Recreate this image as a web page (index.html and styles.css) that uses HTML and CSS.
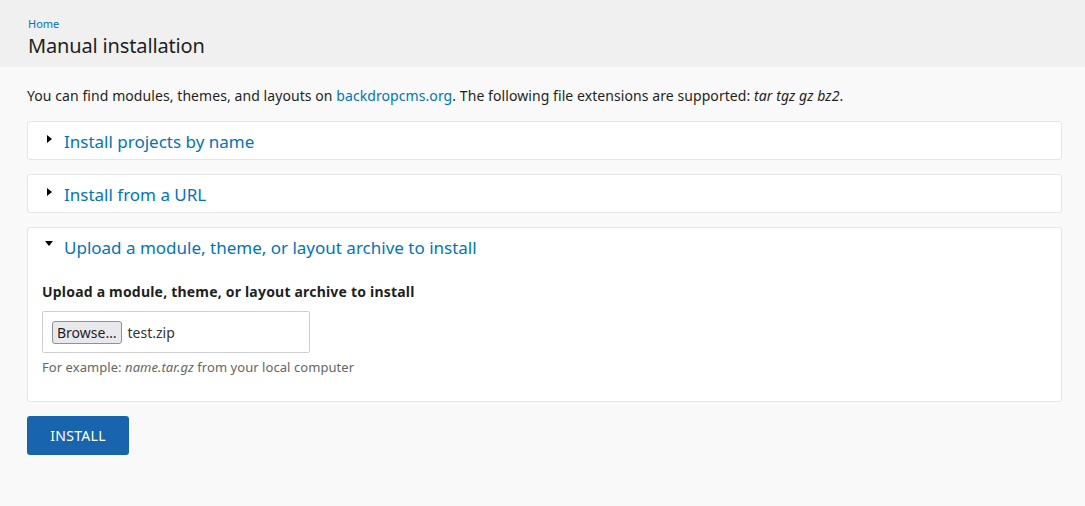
FILE: index.html
```html
<!DOCTYPE html>
<html>
<head>
<meta charset="utf-8">
<link rel="stylesheet" href="styles.css">
</head>
<body>
<header class="page-header">
  <nav class="breadcrumb"><a href="#">Home</a></nav>
  <h1 class="page-title">Manual installation</h1>
</header>
<main class="content">
  <p class="intro">You can find modules, themes, and layouts on <a href="#">backdropcms.org</a>. The following file extensions are supported: <em>tar tgz gz bz2</em>.</p>
  <section class="fieldset collapsed">
    <div class="legend"><span class="tri tri-right"></span><span class="legend-text">Install projects by name</span></div>
  </section>
  <section class="fieldset collapsed">
    <div class="legend"><span class="tri tri-right"></span><span class="legend-text">Install from a URL</span></div>
  </section>
  <section class="fieldset open">
    <div class="legend"><span class="tri tri-down"></span><span class="legend-text">Upload a module, theme, or layout archive to install</span></div>
    <div class="fieldset-body">
      <div class="label">Upload a module, theme, or layout archive to install</div>
      <div class="file-box"><span class="browse">Browse…</span><span class="file-name">test.zip</span></div>
      <div class="desc">For example: <em>name.tar.gz</em> from your local computer</div>
    </div>
  </section>
  <button class="install">INSTALL</button>
</main>
</body>
</html>
```

FILE: styles.css
```css
html, body {
  margin: 0;
  padding: 0;
}
body {
  font-family: "Noto Sans", "Open Sans", sans-serif;
  background: #f9f9f9;
  color: #1f1f1f;
  height: 506px;
  overflow: hidden;
}
a {
  color: #0074bd;
  text-decoration: none;
}
.page-header {
  background: #f0f0f0;
  padding: 16px 28px 0;
  height: 51px;
}
.breadcrumb {
  font-size: 11px;
  line-height: 15px;
}
.page-title {
  margin: 1px 0 0;
  font-size: 20px;
  font-weight: 400;
  line-height: 28px;
  letter-spacing: -0.15px;
  color: #1f1f1f;
}
.content {
  padding: 0 23px 0 27px;
}
.intro {
  margin: 19px 0 0;
  font-size: 14px;
  line-height: 20px;
  letter-spacing: 0.075px;
}
.fieldset {
  background: #fff;
  border: 1px solid #e6e6e6;
  border-radius: 3px;
  margin-top: 14px;
}
.fieldset.collapsed {
  height: 37px;
}
.fieldset:first-of-type {
  margin-top: 15px;
}
.legend {
  display: flex;
  align-items: center;
  height: 37px;
  padding-left: 19px;
}
.legend-text {
  font-size: 17px;
  color: #0074bd;
  line-height: 24px;
  margin-top: 2px;
}
.tri {
  display: inline-block;
  width: 0;
  height: 0;
}
.tri-right {
  border-top: 4px solid transparent;
  border-bottom: 4px solid transparent;
  border-left: 5px solid #000;
  margin-right: 12px;
  margin-top: -3px;
}
.tri-down {
  border-left: 4.5px solid transparent;
  border-right: 4.5px solid transparent;
  border-top: 5px solid #000;
  margin-left: -2px;
  margin-right: 11px;
  margin-top: -7px;
}
.fieldset-body {
  padding: 17px 14px 25px;
}
.label {
  font-size: 14px;
  font-weight: 700;
  line-height: 20px;
  letter-spacing: 0.2px;
}
.file-box {
  margin-top: 9px;
  width: 257px;
  height: 40px;
  border: 1px solid #cfcfcf;
  border-radius: 2px;
  background: #fff;
  display: flex;
  align-items: center;
  padding-left: 9px;
  box-sizing: content-box;
}
.browse {
  display: inline-block;
  height: 21px;
  line-height: 21px;
  padding: 0 5px 0 4px;
  border: 1px solid #8f8f9d;
  border-radius: 3px;
  background: #e9e9ed;
  font-size: 14px;
  color: #1f1f1f;
}
.file-name {
  margin-left: 5px;
  font-size: 14px;
  color: #333;
}
.desc {
  margin-top: 5px;
  font-size: 13px;
  color: #666;
  line-height: 18px;
  letter-spacing: 0.06px;
}
.install {
  margin-top: 14px;
  width: 102px;
  height: 39px;
  background: #1865ae;
  color: #fff;
  border: 0;
  border-radius: 3px;
  font-family: "Noto Sans", "Open Sans", sans-serif;
  font-size: 14px;
  letter-spacing: 0.3px;
  padding: 0;
}
```
